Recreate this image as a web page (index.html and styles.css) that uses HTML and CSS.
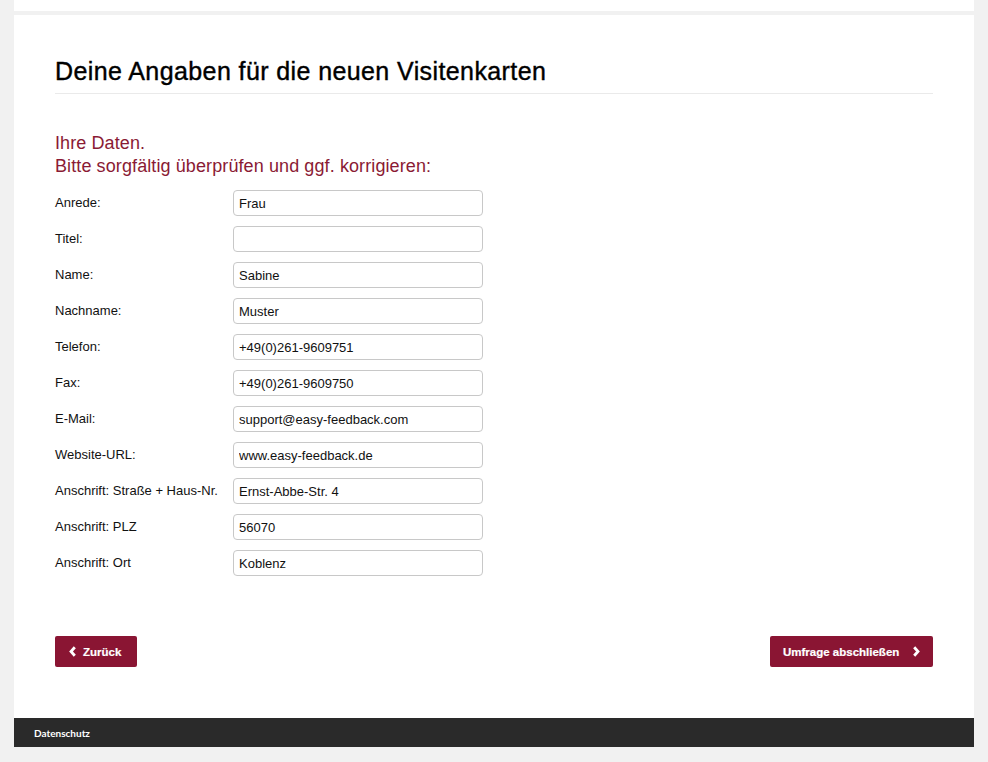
FILE: index.html
```html
<!DOCTYPE html>
<html lang="de">
<head>
<meta charset="utf-8">
<title>Visitenkarten</title>
<link rel="stylesheet" href="styles.css">
</head>
<body>
<div class="topbar"></div>
<main class="card">
  <h1 class="title">Deine Angaben für die neuen Visitenkarten</h1>
  <p class="intro">Ihre Daten.<br>Bitte sorgfältig überprüfen und ggf. korrigieren:</p>
  <form class="form">
    <div class="row"><label class="lbl">Anrede:</label><input class="inp" value="Frau"></div>
    <div class="row"><label class="lbl">Titel:</label><input class="inp" value=""></div>
    <div class="row"><label class="lbl">Name:</label><input class="inp" value="Sabine"></div>
    <div class="row"><label class="lbl">Nachname:</label><input class="inp" value="Muster"></div>
    <div class="row"><label class="lbl">Telefon:</label><input class="inp" value="+49(0)261-9609751"></div>
    <div class="row"><label class="lbl">Fax:</label><input class="inp" value="+49(0)261-9609750"></div>
    <div class="row"><label class="lbl">E-Mail:</label><input class="inp" value="support@easy-feedback.com"></div>
    <div class="row"><label class="lbl">Website-URL:</label><input class="inp" value="www.easy-feedback.de"></div>
    <div class="row"><label class="lbl">Anschrift: Straße + Haus-Nr.</label><input class="inp" value="Ernst-Abbe-Str. 4"></div>
    <div class="row"><label class="lbl">Anschrift: PLZ</label><input class="inp" value="56070"></div>
    <div class="row"><label class="lbl">Anschrift: Ort</label><input class="inp" value="Koblenz"></div>
  </form>
  <div class="actions">
    <button class="btn btn-back" type="button"><svg class="chev" viewBox="0 0 7 11" width="7" height="11"><path d="M5.8 1.2 L2 5.5 L5.8 9.8" fill="none" stroke="#fff" stroke-width="2.8" stroke-linejoin="miter"/></svg>Zurück</button>
    <button class="btn btn-next" type="button">Umfrage abschließen<svg class="chev" viewBox="0 0 7 11" width="7" height="11"><path d="M1.2 1.2 L5 5.5 L1.2 9.8" fill="none" stroke="#fff" stroke-width="2.8" stroke-linejoin="miter"/></svg></button>
  </div>
</main>
<footer class="footer"><a class="flink">Datenschutz</a></footer>
</body>
</html>
```

FILE: styles.css
```css
html, body {
  margin: 0;
  padding: 0;
}
body {
  background: #f1f1f1;
  padding: 0 14px;
  font-family: "Liberation Sans", Arial, Helvetica, sans-serif;
  color: #111;
}
.topbar {
  height: 11px;
  background: #fff;
  margin-bottom: 4px;
}
.card {
  background: #fff;
  padding: 43px 41px 51px;
}
.title {
  margin: 0;
  font-size: 25px;
  line-height: 27px;
  letter-spacing: 0.4px;
  font-weight: normal;
  color: #000;
  padding-bottom: 8px;
  border-bottom: 1px solid #eaeaea;
  -webkit-text-stroke: 0.4px #000;
}
.intro {
  margin: 38px 0 12px;
  font-size: 18px;
  line-height: 23px;
  letter-spacing: 0.1px;
  color: #8a1a34;
}
.form {
  display: flex;
  flex-direction: column;
  gap: 10px;
}
.row {
  display: flex;
  align-items: center;
}
.lbl {
  width: 178px;
  font-size: 13px;
  color: #111;
  margin-top: -2px;
}
.inp {
  box-sizing: border-box;
  width: 250px;
  height: 26px;
  border: 1px solid #c8c8c8;
  border-radius: 4px;
  padding: 0 5px;
  font-family: "Liberation Sans", Arial, sans-serif;
  font-size: 13px;
  color: #111;
  background: #fff;
  outline: none;
}
.actions {
  display: flex;
  justify-content: space-between;
  margin-top: 60px;
}
.btn {
  display: inline-flex;
  align-items: center;
  box-sizing: border-box;
  height: 31px;
  background: #8a1533;
  color: #fff;
  border: none;
  border-radius: 2px;
  font-family: "Liberation Sans", Arial, sans-serif;
  font-weight: bold;
  font-size: 11.5px;
  -webkit-text-stroke: 0.2px #fff;
}
.btn-back {
  width: 82px;
  padding: 0 0 0 14px;
  gap: 7px;
}
.btn-next {
  width: 163px;
  padding: 0 0 0 13px;
  gap: 14px;
}
.footer {
  background: #2a2a2a;
  height: 29px;
  display: flex;
  align-items: center;
  padding-left: 20px;
}
.flink {
  color: #fff;
  font-family: Lato, "Liberation Sans", sans-serif;
  font-weight: bold;
  font-size: 10px;
}
```
